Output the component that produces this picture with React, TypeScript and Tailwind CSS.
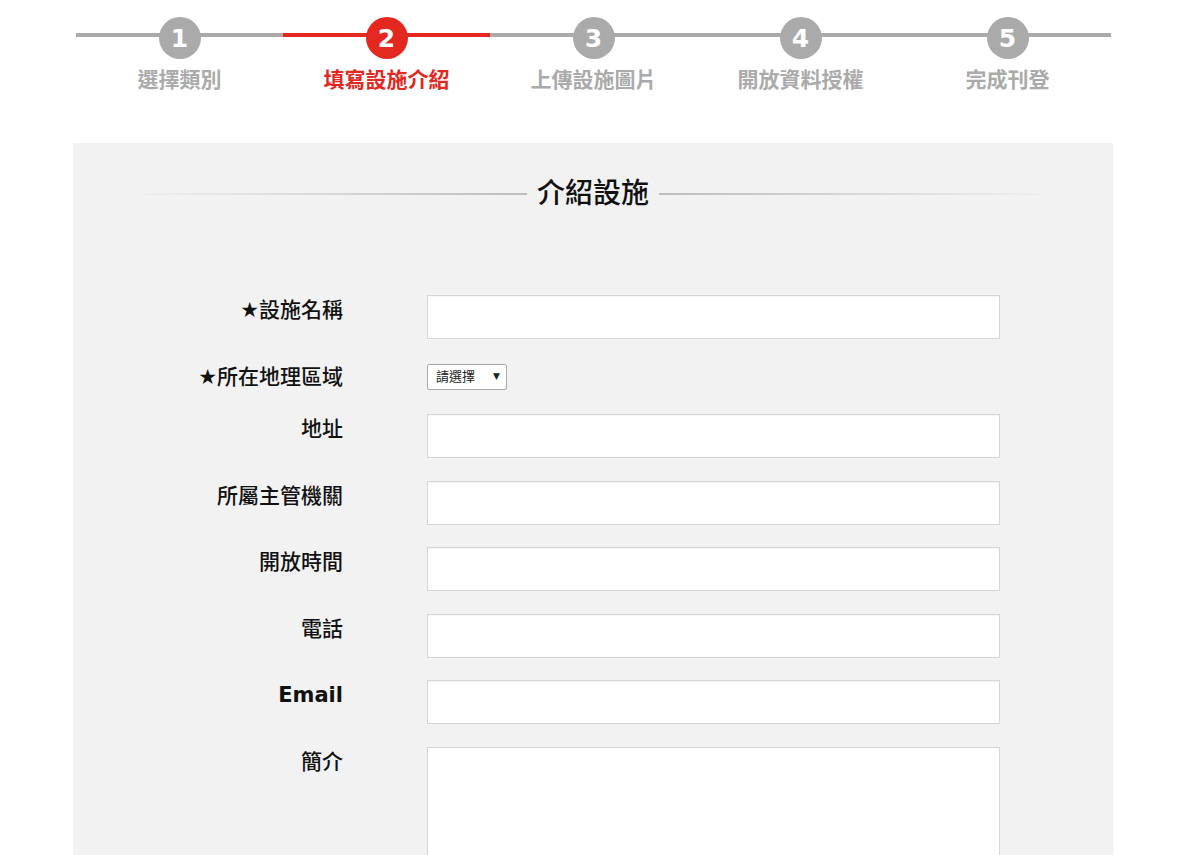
import React from 'react';

const steps = ['選擇類別', '填寫設施介紹', '上傳設施圖片', '開放資料授權', '完成刊登'];
const ACTIVE = 1;

const Stepper: React.FC = () => {
  return (
    <div className="ml-[76px] w-[1035px] grid grid-cols-5 pt-[17px]">
      {steps.map((label, idx) => {
        const active = idx === ACTIVE;
        return (
          <div key={idx} className="flex flex-col items-center">
            <div className="relative w-full h-[42px] flex justify-center">
              {/* connector line */}
              <div className={`absolute left-0 right-0 top-[16px] h-[4px] ${active ? 'bg-[#e3281f]' : 'bg-[#aaaaaa]'}`}></div>
              <div
                className={`relative z-10 w-[42px] h-[42px] rounded-full flex items-center justify-center text-white text-[25px] font-bold leading-none ${active ? 'bg-[#e3281f]' : 'bg-[#aaaaaa]'}`}
                style={{ fontFamily: 'Verdana, "DejaVu Sans", sans-serif' }}
              >
                {idx + 1}
              </div>
            </div>
            <div className={`mt-[7px] text-[21px] font-bold leading-[28px] ${active ? 'text-[#e3281f]' : 'text-[#aaaaaa]'}`}>
              {label}
            </div>
          </div>
        );
      })}
    </div>
  );
};

const inputCls = 'w-[573px] h-[44px] bg-white border border-[#d6d6d6] shadow-[inset_0_1px_1px_rgba(0,0,0,0.04)] outline-none px-2 text-[15px]';

const Row: React.FC<{ label: React.ReactNode; children: React.ReactNode }> = ({ label, children }) => (
  <div className="flex items-start">
    <div className="w-[270px] text-right text-[21px] leading-[30px] font-medium text-[#111]">{label}</div>
    <div className="ml-[84px]">{children}</div>
  </div>
);

const App: React.FC = () => {
  return (
    <div
      className="w-[1200px] h-[855px] bg-white overflow-hidden"
      style={{ fontFamily: '"DejaVu Sans", "Noto Sans CJK TC", sans-serif' }}
    >
      <Stepper />

      {/* Panel */}
      <div className="ml-[73px] mt-[49px] w-[1040px] min-h-[720px] bg-[#f2f2f2] pt-[33px] pb-10">
        {/* Title */}
        <div className="flex items-center px-[52px]">
          <div className="flex-1 h-[2px] bg-gradient-to-r from-transparent to-[#bdbdbd]"></div>
          <h2 className="px-[10px] text-[28px] leading-[36px] font-medium text-[#111]">介紹設施</h2>
          <div className="flex-1 h-[2px] bg-gradient-to-l from-transparent to-[#bdbdbd]"></div>
        </div>

        {/* Form */}
        <div className="mt-[83px] flex flex-col gap-y-[22.5px]">
          <Row label="★設施名稱">
            <input className={inputCls} />
          </Row>
          <Row label="★所在地理區域">
            <div className="mt-[2px] w-[80px] h-[26px] bg-white border border-[#a9a9a9] rounded-[2px] flex items-center pl-[8px] pr-[6px]">
              <select className="appearance-none bg-transparent outline-none text-[13px] text-[#222] flex-1 leading-none">
                <option>請選擇</option>
              </select>
              <span className="text-[9px] text-[#222]">▼</span>
            </div>
          </Row>
          <Row label="地址">
            <input className={inputCls} />
          </Row>
          <Row label="所屬主管機關">
            <input className={inputCls} />
          </Row>
          <Row label="開放時間">
            <input className={inputCls} />
          </Row>
          <Row label="電話">
            <input className={inputCls} />
          </Row>
          <Row label={<span className="font-bold">Email</span>}>
            <input className={inputCls} />
          </Row>
          <Row label="簡介">
            <textarea className="w-[573px] h-[160px] bg-white border border-[#d6d6d6] outline-none resize-none p-2 text-[15px] block" />
          </Row>
        </div>
      </div>
    </div>
  );
};

export default App;
